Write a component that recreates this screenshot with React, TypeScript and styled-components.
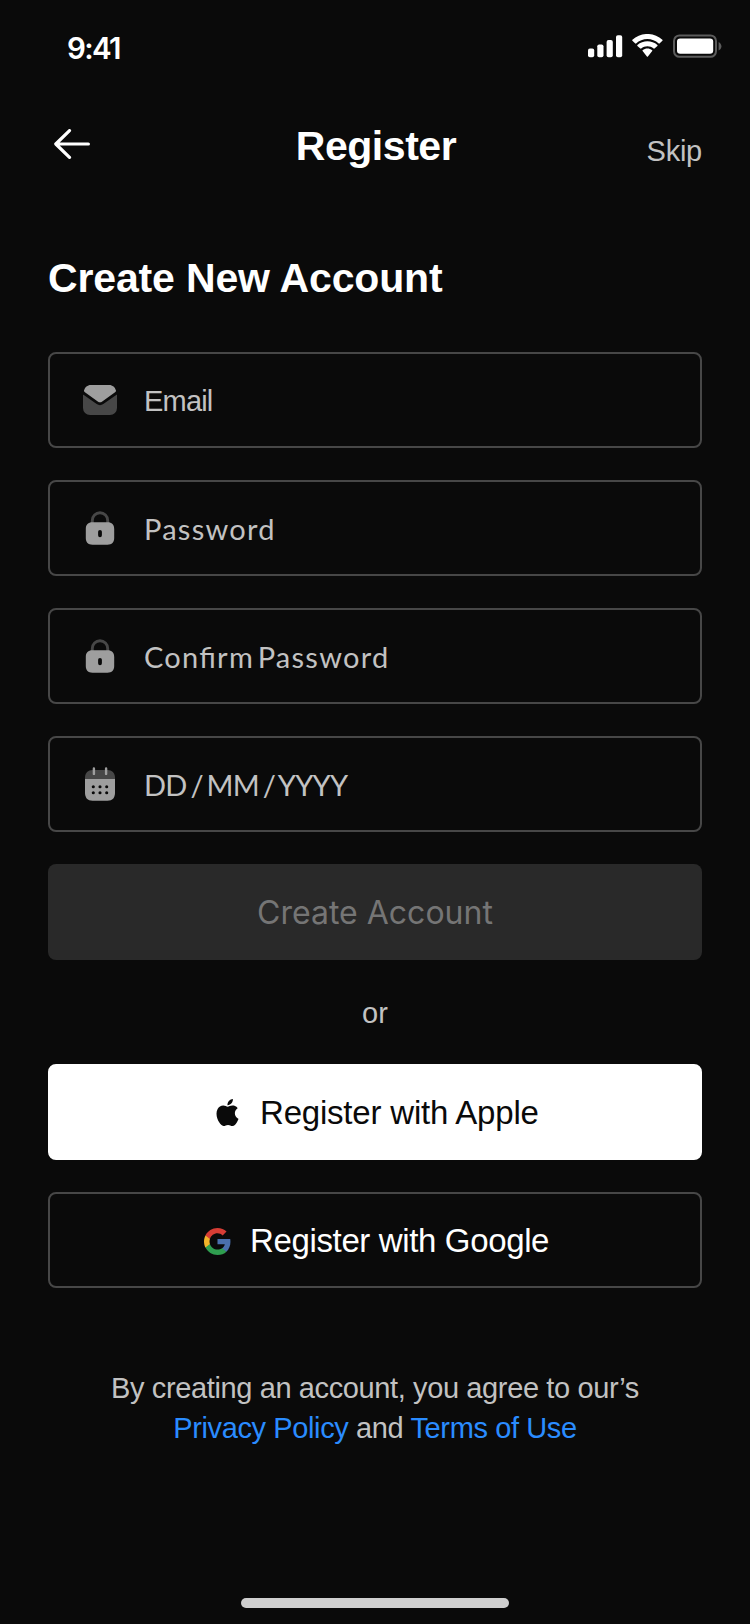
import React from "react";
import styled, { createGlobalStyle } from "styled-components";
import { SiApple } from "react-icons/si";

const colors = {
  bg: "#0a0a0a",
  white: "#ffffff",
  muted: "#c2c2c2",
  border: "#474747",
  iconLight: "#9e9e9e",
  iconDark: "#474747",
  disabledBg: "#292929",
  disabledText: "#757575",
  link: "#2a8cff",
};

const GlobalStyle = createGlobalStyle`
  *, *::before, *::after { box-sizing: border-box; }
  html, body { margin: 0; padding: 0; background: ${colors.bg}; }
  svg { display: block; flex: none; }
`;

const Screen = styled.div`
  width: 750px;
  height: 1624px;
  display: flex;
  flex-direction: column;
  background: ${colors.bg};
  color: ${colors.white};
  font-family: "Liberation Sans", Arial, sans-serif;
  overflow: hidden;
`;

const StatusBar = styled.div`
  height: 88px;
  flex: none;
  display: flex;
  justify-content: space-between;
  align-items: flex-start;
  padding: 34px 28px 0 67px;
`;

const Clock = styled.time`
  font: 600 29.5px/28px Inter, sans-serif;
  letter-spacing: -1.7px;
`;

const StatusIcons = styled.div`
  display: flex;
  align-items: flex-start;
  gap: 10px;
`;

const Header = styled.header`
  height: 116px;
  flex: none;
  display: grid;
  grid-template-columns: 1fr auto 1fr;
  align-items: center;
  padding: 0 48px 0 50px;
`;

const IconButton = styled.button`
  justify-self: start;
  border: 0;
  padding: 0;
  background: none;
  color: inherit;
  margin: 0 0 4px 4px;
`;

const Title = styled.h1`
  margin: 0;
  font-size: 41px;
  line-height: 48px;
  font-weight: 700;
  letter-spacing: -0.45px;
`;

const SkipLink = styled.a`
  justify-self: end;
  margin-top: 10px;
  font-size: 29px;
  line-height: 40px;
  letter-spacing: -0.25px;
  color: ${colors.muted};
`;

const Main = styled.main`
  flex: 1;
  display: flex;
  flex-direction: column;
  padding: 50px 48px 0;
`;

const Heading = styled.h2`
  margin: 0 0 50px;
  font-size: 41px;
  line-height: 48px;
  font-weight: 700;
  letter-spacing: -0.15px;
`;

const Form = styled.div`
  display: flex;
  flex-direction: column;
  gap: 32px;
`;

const Field = styled.label`
  height: 96px;
  display: flex;
  align-items: center;
  gap: 24px;
  padding: 0 30px;
  border: 2px solid ${colors.border};
  border-radius: 8px;
`;

const Placeholder = styled.span`
  padding-top: 1px;
  font-size: 29px;
  line-height: 40px;
  letter-spacing: -0.8px;
  color: ${colors.muted};
`;

const RoundPlaceholder = styled(Placeholder)<{ $tracking: number; $wordGap: number }>`
  padding-top: 2px;
  font-family: Lato, sans-serif;
  font-feature-settings: "liga" 1;
  letter-spacing: ${(p) => p.$tracking}px;
  word-spacing: ${(p) => p.$wordGap}px;
`;

const SubmitButton = styled.button`
  height: 96px;
  border: 0;
  border-radius: 8px;
  padding: 2px 0 0;
  background: ${colors.disabledBg};
  color: ${colors.disabledText};
  font: 400 32px/40px Inter, sans-serif;
`;

const Divider = styled.div`
  height: 104px;
  display: flex;
  align-items: center;
  justify-content: center;
  padding-top: 2px;
  font-size: 29px;
  color: ${colors.muted};
`;

const SocialButton = styled.button<{ $filled?: boolean; $inset: number }>`
  height: 96px;
  display: flex;
  align-items: center;
  gap: 19px;
  padding: 0 0 0 ${(p) => p.$inset}px;
  border: 2px solid ${(p) => (p.$filled ? colors.white : colors.border)};
  border-radius: 8px;
  background: ${(p) => (p.$filled ? colors.white : "transparent")};
  color: ${(p) => (p.$filled ? colors.bg : colors.white)};
`;

const SocialLabel = styled.span<{ $tracking: number }>`
  padding-top: 2px;
  font: 400 33px/40px "Liberation Sans", Arial, sans-serif;
  letter-spacing: ${(p) => p.$tracking}px;
`;

const Legal = styled.p`
  margin: 80px 0 0;
  text-align: center;
  font-size: 29px;
  line-height: 40px;
  letter-spacing: -0.38px;
  color: ${colors.muted};
`;

const LegalLink = styled.a`
  color: ${colors.link};
`;

const HomeArea = styled.footer`
  height: 26px;
  flex: none;
  display: flex;
  justify-content: center;
`;

const HomeIndicator = styled.div`
  width: 268px;
  height: 10px;
  border-radius: 5px;
  background: #cfcfcf;
`;

const Signal = () => (
  <svg width="34" height="24" fill="#fff" overflow="visible">
    <rect x="0" y="14.6" width="6.2" height="8.6" rx="1.9" />
    <rect x="9.3" y="10.4" width="6.2" height="12.8" rx="1.9" />
    <rect x="18.6" y="6" width="6.2" height="17.2" rx="1.9" />
    <rect x="28" y="1.2" width="6.2" height="22" rx="1.9" />
  </svg>
);

const Wifi = () => (
  <svg width="31" height="24" viewBox="0 0 31 24" fill="#fff">
    <path d="M15.4 5c4.2 0 8.2 1.6 11.3 4.5.2.2.6.2.8 0l2.9-2.7c.3-.3.3-.8 0-1C22-2 8.8-2 .4 5.8c-.3.2-.3.7 0 1l2.9 2.7c.2.2.6.2.8 0C7.2 6.6 11.2 5 15.4 5z" />
    <path d="M15.4 12.3c2.3 0 4.5.8 6.200 2.300.3.2.6.2.9 0l2.900-2.700c.3-.3.3-.7 0-1-5.600-5-14.400-5-20 0-.3.3-.3.7 0 1l2.900 2.700c.3.2.6.2.9 0 1.700-1.500 3.900-2.300 6.200-2.300z" />
    <path d="M20.200 17.100c.3-.3.3-.7 0-.9-2.800-2.200-6.800-2.200-9.600 0-.3.2-.3.6 0 .9l4.300 5.400c.3.3.7.3 1 0z" />
  </svg>
);

const Battery = () => (
  <svg width="49" height="24" fill="none">
    <rect x="1" y="1.4" width="42" height="21.4" rx="5.5" stroke="#5c5c5c" strokeWidth="2" />
    <rect x="4" y="4.4" width="36.2" height="15.4" rx="3.2" fill="#fff" />
    <path d="M45.6 8v8.6c1.600-.7 2.800-2.300 2.800-4.300s-1.200-3.600-2.800-4.300z" fill="#5c5c5c" />
  </svg>
);

const BackArrow = () => (
  <svg width="36" height="30" viewBox="0 0 36 30" fill="none" stroke="#fff" strokeWidth="3.2" strokeLinecap="round" strokeLinejoin="round">
    <path d="M15.5 1.6L1.800 15l13.700 13.400M2 15h32.400" />
  </svg>
);

const MailIcon = () => (
  <svg width="40" height="40" viewBox="0 0 40 40">
    <path
      d="M3 15.2c0-.4.5-.6.8-.3L16.7 24c2 1.5 4.6 1.5 6.6 0l12.9-9.1c.3-.3.8-.1.8.3V28a7 7 0 0 1-7 7H10a7 7 0 0 1-7-7z"
      fill={colors.iconDark}
    />
    <path
      d="M4 10.600C4.900 7.200 7.400 5 10.800 5h18.400c3.400 0 5.900 2.200 6.800 5.600.1.500-.1 1.100-.6 1.500L21.900 21.700c-1.100.8-2.700.8-3.800 0L4.600 12.100c-.5-.4-.7-1-.6-1.500z"
      fill={colors.iconLight}
    />
  </svg>
);

const LockIcon = () => (
  <svg width="40" height="40" viewBox="0 0 40 40">
    <path d="M12.300 15v-2.600a7.700 7.700 0 0 1 15.400 0V15" fill="none" stroke={colors.iconDark} strokeWidth="2.900" />
    <path
      fillRule="evenodd"
      d="M12.500 14.300h15c4.400 0 6.700 2.400 6.700 6.700v9c0 4.300-2.300 6.700-6.700 6.700h-15c-4.400 0-6.700-2.400-6.700-6.700v-9c0-4.300 2.300-6.700 6.700-6.700zM20 21.900a1.900 1.900 0 0 0-1.900 1.900v3.500a1.900 1.900 0 0 0 3.800 0v-3.500a1.900 1.900 0 0 0-1.900-1.900z"
      fill={colors.iconLight}
    />
  </svg>
);

const CalendarIcon = () => (
  <svg width="40" height="40" viewBox="0 0 40 40">
    <path d="M5 15.500v-1.700C5 8.800 8 6 12.500 6h15C32 6 35 8.800 35 13.800v1.700z" fill={colors.iconDark} />
    <path d="M5 15h30v13.800c0 5-2.500 8-7.500 8h-15c-5 0-7.500-3-7.500-8z" fill={colors.iconLight} />
    <path d="M13.900 4.500v5.400M26.100 4.500v5.400" stroke={colors.iconLight} strokeWidth="2.400" strokeLinecap="round" />
    <g fill={colors.bg}>
      {[13.3, 20, 26.7].map((x) =>
        [22.7, 28.7].map((y) => <circle key={`${x}-${y}`} cx={x} cy={y} r="1.55" />)
      )}
    </g>
  </svg>
);

const GoogleIcon = () => (
  <svg width="27" height="29" viewBox="0 -1.33 18 19.33">
    <path fill="#4a70ad" d="M17.64 9.2c0-.637-.057-1.251-.164-1.84H9v3.481h4.844c-.209 1.125-.843 2.078-1.796 2.717v2.258h2.908c1.702-1.567 2.684-3.874 2.684-6.615z" />
    <path fill="#2f9e4f" d="M9 18c2.43 0 4.467-.806 5.956-2.184l-2.908-2.258c-.806.54-1.837.86-3.048.86-2.344 0-4.328-1.584-5.036-3.711H.957v2.332C2.438 15.983 5.482 18 9 18z" />
    <path fill="#f2b42a" d="M3.964 10.707c-.18-.54-.282-1.117-.282-1.707s.102-1.167.282-1.707V4.961H.957C.347 6.175 0 7.55 0 9s.348 2.825.957 4.039l3.007-2.332z" />
    <path fill="#d63d35" d="M9 3.58c1.321 0 2.508.454 3.44 1.345l2.582-2.58C13.463.891 11.426 0 9 0 5.482 0 2.438 2.017.957 4.961L3.964 7.293C4.672 5.166 6.656 3.58 9 3.58z" />
  </svg>
);

export default function App() {
  return (
    <Screen>
      <GlobalStyle />
      <StatusBar>
        <Clock>9:41</Clock>
        <StatusIcons>
          <Signal />
          <Wifi />
          <Battery />
        </StatusIcons>
      </StatusBar>
      <Header>
        <IconButton aria-label="Back">
          <BackArrow />
        </IconButton>
        <Title>Register</Title>
        <SkipLink>Skip</SkipLink>
      </Header>
      <Main>
        <Heading>Create New Account</Heading>
        <Form>
          <Field>
            <MailIcon />
            <Placeholder>Email</Placeholder>
          </Field>
          <Field>
            <LockIcon />
            <RoundPlaceholder $tracking={1.25} $wordGap={0}>Password</RoundPlaceholder>
          </Field>
          <Field>
            <LockIcon />
            <RoundPlaceholder $tracking={1.25} $wordGap={-5}>Confirm Password</RoundPlaceholder>
          </Field>
          <Field>
            <CalendarIcon />
            <RoundPlaceholder $tracking={-0.7} $wordGap={-3}>DD / MM / YYYY</RoundPlaceholder>
          </Field>
          <SubmitButton>Create Account</SubmitButton>
        </Form>
        <Divider>or</Divider>
        <Form>
          <SocialButton $filled $inset={164}>
            <SiApple size={27} />
            <SocialLabel $tracking={-0.2}>Register with Apple</SocialLabel>
          </SocialButton>
          <SocialButton $inset={154}>
            <GoogleIcon />
            <SocialLabel $tracking={-0.36}>Register with Google</SocialLabel>
          </SocialButton>
        </Form>
        <Legal>
          By creating an account, you agree to our’s
          <br />
          <LegalLink>Privacy Policy</LegalLink> and <LegalLink>Terms of Use</LegalLink>
        </Legal>
      </Main>
      <HomeArea>
        <HomeIndicator />
      </HomeArea>
    </Screen>
  );
}
